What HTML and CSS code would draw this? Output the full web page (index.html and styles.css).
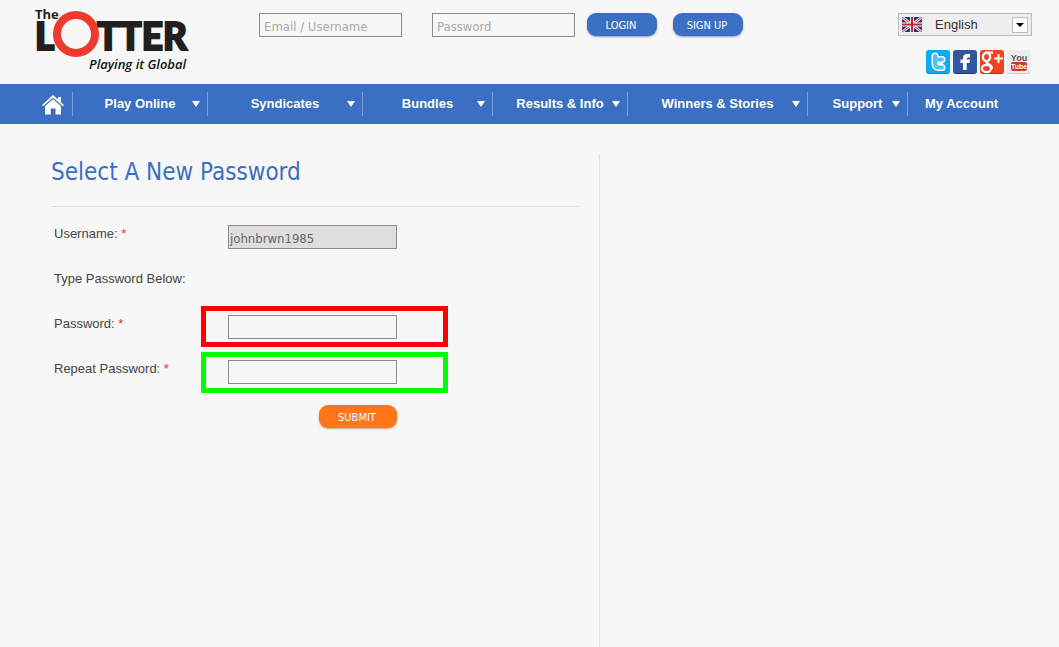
FILE: index.html
```
<!DOCTYPE html>
<html lang="en">
<head>
  <meta charset="UTF-8">
  <meta name="viewport" content="width=device-width, initial-scale=1">
  <title>theLotter - Select A New Password</title>
  <link rel="stylesheet" href="styles.css">
</head>
<body>

  <!-- Header -->
  <header class="header">
    <a class="logo" href="#" aria-label="theLotter">
      <svg width="160" height="70" viewBox="0 0 160 70">
        <text class="logo-the" x="1" y="12">The</text>
        <text class="logo-name" x="1" y="43">L</text>
        <text class="logo-name" x="63" y="43">TTER</text>
        <circle cx="42" cy="27" r="19" fill="#f7f7f7" stroke="#ee3a2d" stroke-width="8"/>
        <text class="logo-tagline" x="55" y="62">Playing it Global</text>
      </svg>
    </a>

    <form class="login-form">
      <input class="text-box login-input" type="text" placeholder="Email / Username" aria-label="Email / Username">
      <input class="text-box login-input" type="password" placeholder="Password" aria-label="Password">
      <div class="login-buttons">
        <button class="btn" type="submit">LOGIN</button>
        <button class="btn" type="button">SIGN UP</button>
      </div>
    </form>

    <div class="header-right">
      <div class="language">
        <svg class="language-flag" width="20" height="15" viewBox="0 0 20 15">
          <rect width="20" height="15" fill="#26397c"/>
          <path d="M0 0L20 15M20 0L0 15" stroke="#fff" stroke-width="2.6"/>
          <path d="M0 0L20 15M20 0L0 15" stroke="#c8202f" stroke-width="1"/>
          <path d="M10 0V15M0 7.500H20" stroke="#fff" stroke-width="4"/>
          <path d="M10 0V15M0 7.500H20" stroke="#c8202f" stroke-width="2"/>
        </svg>
        <select class="language-select" aria-label="Language">
          <option>English</option>
        </select>
        <span class="language-arrow"></span>
      </div>
      <div class="social">
        <a href="#" aria-label="Twitter">
          <svg width="24" height="24" viewBox="0 0 24 24">
            <rect y="1" width="24" height="23" rx="3" fill="#0a8cc9"/>
            <rect width="24" height="23" rx="3" fill="#0fabf2"/>
            <path d="M9 6V13.500Q9 17.500 13 17.500H16M9 9.500H16" fill="none" stroke="#fff" stroke-width="7" stroke-linecap="round" stroke-linejoin="round"/>
            <path d="M9 6V13.500Q9 17.500 13 17.500H16M9 9.500H16" fill="none" stroke="#4fc3f5" stroke-width="4" stroke-linecap="round" stroke-linejoin="round"/>
            <path d="M12.500 13.500H17" stroke="#fff" stroke-width="1.500"/>
          </svg>
        </a>
        <a href="#" aria-label="Facebook">
          <svg width="24" height="24" viewBox="0 0 24 24">
            <rect y="1" width="24" height="23" rx="3" fill="#1f3a73"/>
            <rect width="24" height="23" rx="3" fill="#32579f"/>
            <path d="M10 20V13H7.500V9.500H10V8Q10 4 14 4H17V7.500H15Q13.600 7.500 13.600 9V9.500H17L16.500 13H13.600V20Z" fill="#fff"/>
          </svg>
        </a>
        <a href="#" aria-label="Google Plus">
          <svg width="24" height="24" viewBox="0 0 24 24">
            <rect y="1" width="24" height="23" rx="3" fill="#b93114"/>
            <rect width="24" height="23" rx="3" fill="#f0431f"/>
            <g fill="none" stroke="#fff">
              <ellipse cx="6.500" cy="7" rx="3.600" ry="4.200" stroke-width="2.400"/>
              <path d="M5 2.600H13M7 11.500Q6 13 9 14.500Q12.500 16.500 11.500 19" stroke-width="2.400"/>
              <ellipse cx="6.500" cy="18.500" rx="4.600" ry="3.600" stroke-width="2.200"/>
              <path d="M18.500 4V13M14 8.500H23" stroke-width="2"/>
            </g>
          </svg>
        </a>
        <a href="#" aria-label="YouTube">
          <svg width="24" height="24" viewBox="0 0 24 24">
            <rect y="1" width="24" height="23" rx="3" fill="#c9d1db"/>
            <rect width="24" height="23" rx="3" fill="#e9edf2"/>
            <text class="yt-you" x="12" y="11" text-anchor="middle">You</text>
            <rect x="4" y="12" width="16" height="9" rx="2" fill="#d3382f"/>
            <text class="yt-tube" x="12" y="19" text-anchor="middle">Tube</text>
          </svg>
        </a>
      </div>
    </div>
  </header>

  <!-- Main menu -->
  <nav class="menu">
    <a class="menu-home" href="#" aria-label="Home">
      <svg width="22" height="20" viewBox="0 0 22 20" fill="#fff">
        <path d="M11 0L16 4.600V2H19V7.300L22 10L20.800 11.300L11 2.600L1.200 11.300L0 10Z"/>
        <path d="M11 4L19 11.200V19.500H13.500V13.500H8.700V19.500H3V11.200Z"/>
      </svg>
    </a>
    <a class="menu-item" href="#"><span>Play Online</span></a>
    <a class="menu-item" href="#"><span>Syndicates</span></a>
    <a class="menu-item" href="#"><span>Bundles</span></a>
    <a class="menu-item" href="#"><span>Results &amp; Info</span></a>
    <a class="menu-item" href="#"><span>Winners &amp; Stories</span></a>
    <a class="menu-item" href="#"><span>Support</span></a>
    <a class="menu-account" href="#">My Account</a>
  </nav>

  <!-- New password -->
  <main class="content">
    <section class="panel">
      <h1>Select A New Password</h1>
      <form class="password-form">
        <div class="row">
          <label for="username">Username: <span class="required">*</span></label>
          <div class="field"><input class="text-box" id="username" type="text" value="johnbrwn1985" disabled></div>
        </div>
        <div class="row">
          <p>Type Password Below:</p>
        </div>
        <div class="row">
          <label for="password">Password: <span class="required">*</span></label>
          <div class="field marked marked-red"><input class="text-box" id="password" type="password"></div>
        </div>
        <div class="row">
          <label for="repeat">Repeat Password: <span class="required">*</span></label>
          <div class="field marked marked-green"><input class="text-box" id="repeat" type="password"></div>
        </div>
        <div class="row">
          <div class="field field-submit"><button class="btn btn-submit" type="submit">SUBMIT</button></div>
        </div>
      </form>
    </section>
    <aside class="side"></aside>
  </main>

</body>
</html>
```
FILE: styles.css
```
*, *::before, *::after { box-sizing: border-box; margin: 0; padding: 0; }

body {
  display: flex;
  flex-direction: column;
  min-height: 100vh;
  background: #f7f7f7;
  color: #444;
  font: 13px/18px "Liberation Sans", Arial, sans-serif;
}
a { color: inherit; text-decoration: none; }
svg { display: block; }

/* Header */
.header {
  display: flex;
  align-items: flex-start;
  height: 84px;
  padding: 0 27px 0 34px;
}
.logo { padding-top: 7px; }
.logo-the { font: bold 13px "Open Sans", sans-serif; fill: #231f20; }
.logo-name { font: 900 37px Lato, sans-serif; fill: #231f20; stroke: #231f20; stroke-width: 2px; }
.logo-tagline { font: italic 600 13px "Open Sans", sans-serif; fill: #111; }

.login-form {
  display: flex;
  gap: 30px;
  padding: 13px 0 0 65px;
}
.text-box {
  height: 24px;
  padding: 3px 4px 0;
  border: 1px solid #8c8c8c;
  background: #f7f7f7;
  color: #666;
  font: 13px "DejaVu Sans Condensed", "DejaVu Sans", sans-serif;
}
.text-box::placeholder { color: #aaa; opacity: 1; }
.login-input { width: 143px; }
.login-buttons {
  display: flex;
  gap: 16px;
  margin-left: -18px;
}
.btn {
  width: 70px;
  height: 23px;
  padding: 2px 2px 0 0;
  border: none;
  border-radius: 9px;
  background: #3a6fc4;
  box-shadow: 0 1px 2px #8a9dc0;
  color: #fff;
  font: 11px "DejaVu Sans Condensed", "DejaVu Sans", sans-serif;
  cursor: pointer;
}

.header-right {
  display: flex;
  flex-direction: column;
  align-items: flex-end;
  gap: 14px;
  margin-left: auto;
  padding-top: 13px;
}
.language { position: relative; }
.language-select {
  display: block;
  width: 134px;
  height: 23px;
  padding-left: 36px;
  border: 1px solid #bbb;
  border-radius: 0;
  background: #eee;
  color: #333;
  font: 13px "Liberation Sans", Arial, sans-serif;
  appearance: none;
}
.language-flag {
  position: absolute;
  top: 4px;
  left: 4px;
}
.language-arrow {
  position: absolute;
  top: 4px;
  right: 4px;
  width: 16px;
  height: 16px;
  border: 1px solid #bbb;
  background: #fff;
  pointer-events: none;
}
.language-arrow::after {
  content: "";
  display: block;
  margin: 5px auto 0;
  width: 8px;
  height: 4px;
  background: #000;
  clip-path: polygon(0 0, 100% 0, 50% 100%);
}
.social {
  display: flex;
  gap: 3px;
  padding-right: 1px;
}
.yt-you { font: bold 9px "Liberation Sans Narrow", "Liberation Sans", Arial, sans-serif; fill: #555; }
.yt-tube { font: bold 7px "Liberation Sans Narrow", "Liberation Sans", Arial, sans-serif; fill: #fff; }

/* Main menu */
.menu {
  display: grid;
  grid-template-columns: 40px 135fr 155fr 130fr 135fr 180fr 100fr 124fr;
  align-items: center;
  height: 40px;
  padding: 0 27px 0 33px;
  background: #3a6fc4;
  color: #fff;
  font-size: 13px;
  font-weight: bold;
}
.menu-home,
.menu-item {
  height: 24px;
  border-right: 1px solid #7c9fd9;
}
.menu-home {
  padding: 3px 0 0 9px;
}
.menu-item {
  display: grid;
  grid-template-columns: 1fr auto 1fr;
  align-items: center;
  white-space: nowrap;
}
.menu-item::before { content: ""; }
.menu-item::after {
  content: "";
  justify-self: end;
  margin-right: 7px;
  width: 8px;
  height: 6px;
  background: #fff;
  clip-path: polygon(0 0, 100% 0, 50% 100%);
}
.menu-account { padding-left: 17px; }

/* New password */
.content {
  display: grid;
  grid-template-columns: 599fr 460fr;
  flex: 1;
  padding-top: 30px;
}
.panel { padding: 0 20px 0 51px; }
.panel h1 {
  padding-bottom: 16px;
  border-bottom: 1px solid #e2e2e2;
  color: #3a6fc4;
  font: 24px/36px "DejaVu Sans Condensed", "DejaVu Sans", sans-serif;
}
.side { border-left: 1px solid #e2e2e2; }

.password-form { padding: 18px 0 0 3px; }
.row {
  display: flex;
  height: 45px;
}
.row label,
.row p {
  width: 174px;
}
.required { color: #e03c28; }
.field {
  position: relative;
  width: 169px;
}
.field .text-box {
  display: block;
  width: 100%;
  padding: 3px 1px 0;
}
.field .text-box:disabled { background: #dedede; }
.field-submit {
  display: flex;
  justify-content: flex-end;
  margin-left: 174px;
}
.btn-submit {
  width: 78px;
  background: #ff7519;
  box-shadow: 0 1px 2px #c9a58c;
}

/* Frames around the two password fields */
.marked::before {
  content: "";
  position: absolute;
  top: -9px;
  left: -27px;
  width: 247px;
  height: 41px;
  border: 5px solid;
  pointer-events: none;
}
.marked-red::before { border-color: #f00; }
.marked-green::before { top: -8px; border-color: #0f0; }
```
